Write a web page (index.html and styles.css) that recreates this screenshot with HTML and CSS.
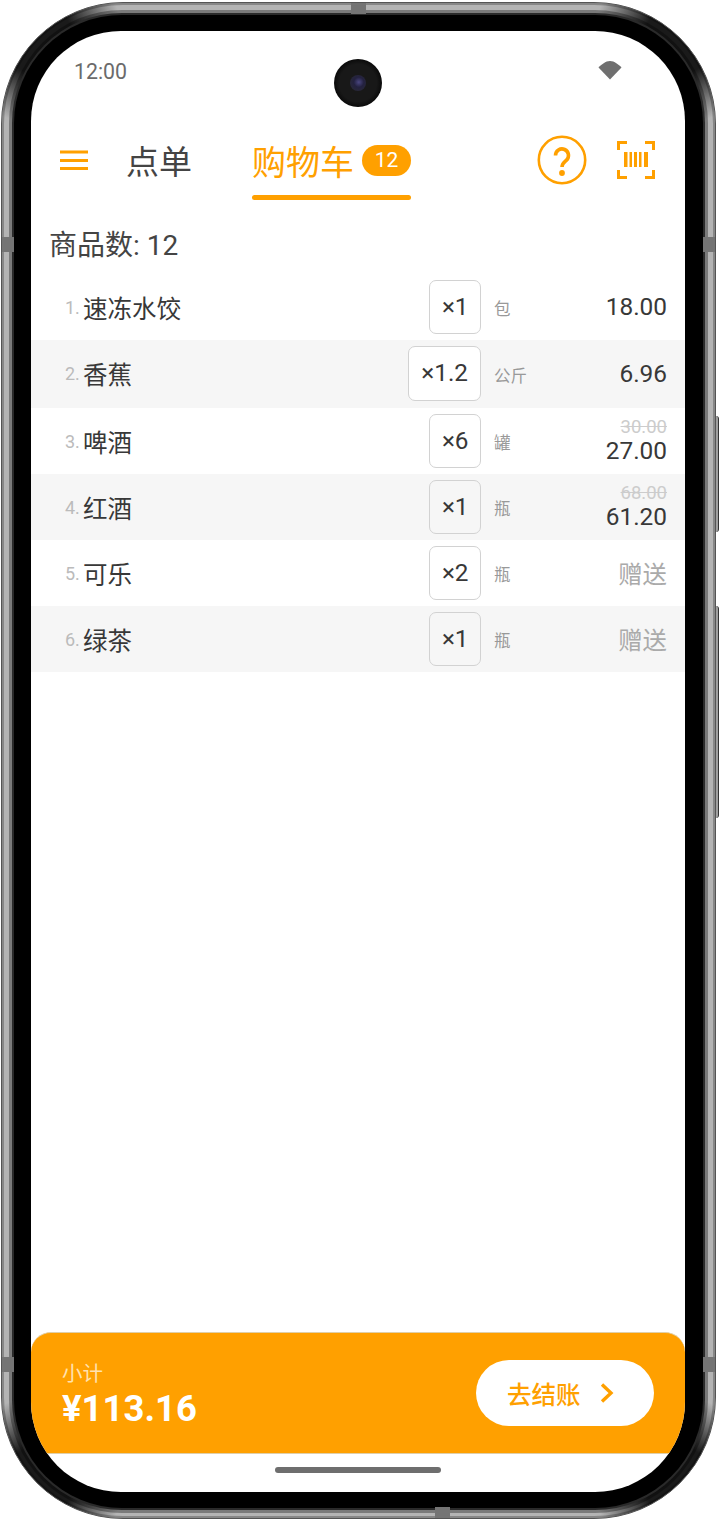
FILE: index.html
```html
<!DOCTYPE html>
<html lang="zh-CN">
<head>
  <meta charset="UTF-8" />
  <meta name="viewport" content="width=device-width, initial-scale=1.0"/>
  <title>购物车</title>
  <link rel="stylesheet" href="styles.css">
</head>
<body>

  <div class="device">
    <span class="side-btn side-btn-top"></span>
    <span class="side-btn side-btn-low"></span>
    <span class="seam seam-left-top"></span>
    <span class="seam seam-right-top"></span>
    <span class="seam seam-left-low"></span>
    <span class="seam seam-right-low"></span>
    <span class="seam seam-top"></span>
    <span class="seam seam-bottom"></span>

    <div class="bezel">
      <div class="screen">
        <div class="camera"><span class="lens"></span></div>

        <div class="status-bar">
          <span class="clock">12:00</span>
          <svg class="wifi" width="24" height="20" viewBox="0 0 24 20">
            <path d="M0.5 7.5C3.5 4.5 7.5 1 12 1s8.500 3.500 11.500 6.500L12 19.500z" fill="#6f6f6f"/>
          </svg>
        </div>

        <div class="header">
          <div class="menu-btn">
            <svg width="28" height="20" viewBox="0 0 28 20">
              <path d="M0 2h28M0 10.500h28M0 18.500h28" stroke="#ffa000" stroke-width="3"/>
            </svg>
          </div>
          <div class="tab">点单</div>
          <div class="tab-active">
            <div class="tab-label">购物车<span class="badge">12</span></div>
            <div class="tab-line"></div>
          </div>
          <div class="help-btn">
            <svg width="50" height="50" viewBox="0 0 50 50" fill="none">
              <circle cx="25" cy="25" r="23.200" stroke="#ffa000" stroke-width="2.600"/>
              <path d="M18.500 20.500a6.500 6.500 0 1 1 10.800 4.800c-2.600 2.300-4.300 3.300-4.300 6.700" stroke="#ffa000" stroke-width="3.600"/>
              <circle cx="25" cy="38" r="2.900" fill="#ffa000"/>
            </svg>
          </div>
          <div class="scan-btn">
            <svg width="38" height="38" viewBox="0 0 38 38" fill="none">
              <path d="M1.500 9V1.500H10M28 1.500h8.500V9M1.500 29v7.500H10M28 36.500h8.500V29" stroke="#ffa000" stroke-width="3"/>
              <path d="M7 11h3.500v15H7zM12.500 11h2.500v15h-2.500zM17 11h3v15h-3zM22 11h2.500v15H22zM27 11h4v15h-4z" fill="#ffa000"/>
            </svg>
          </div>
        </div>

        <div class="count">商品数: 12</div>

        <div class="list">
          <div class="row">
            <span class="num">1.</span>
            <span class="name">速冻水饺</span>
            <span class="chip">×1</span>
            <span class="unit">包</span>
            <span class="price">18.00</span>
          </div>
          <div class="row row-alt row-tall">
            <span class="num">2.</span>
            <span class="name">香蕉</span>
            <span class="chip chip-edit">×1.2</span>
            <span class="unit">公斤</span>
            <span class="price">6.96</span>
          </div>
          <div class="row">
            <span class="num">3.</span>
            <span class="name">啤酒</span>
            <span class="chip">×6</span>
            <span class="unit">罐</span>
            <span class="price"><s class="price-old">30.00</s>27.00</span>
          </div>
          <div class="row row-alt">
            <span class="num">4.</span>
            <span class="name">红酒</span>
            <span class="chip">×1</span>
            <span class="unit">瓶</span>
            <span class="price"><s class="price-old">68.00</s>61.20</span>
          </div>
          <div class="row">
            <span class="num">5.</span>
            <span class="name">可乐</span>
            <span class="chip">×2</span>
            <span class="unit">瓶</span>
            <span class="price price-gift">赠送</span>
          </div>
          <div class="row row-alt">
            <span class="num">6.</span>
            <span class="name">绿茶</span>
            <span class="chip">×1</span>
            <span class="unit">瓶</span>
            <span class="price price-gift">赠送</span>
          </div>
        </div>

        <div class="checkout-bar">
          <div class="totals">
            <div class="totals-label">小计</div>
            <div class="totals-value">¥113.16</div>
          </div>
          <button class="pay-btn" type="button">
            去结账
            <svg width="14" height="22" viewBox="0 0 14 22" fill="none">
              <path d="M2 2.500l9 8.500-9 8.500" stroke="#ffa000" stroke-width="3.400"/>
            </svg>
          </button>
        </div>

        <div class="home-area"><span class="home-bar"></span></div>
      </div>
    </div>
  </div>

</body>
</html>
```

FILE: styles.css
```css
:root {
  --accent-color: #ffa000;
  --text-color: #383838;
  --row-alt: #f6f6f6;
  --chip-border: #d2d2d2;
}

* {
  margin: 0;
  padding: 0;
  box-sizing: border-box;
}

body {
  font-family: Roboto, 'Noto Sans CJK SC', sans-serif;
  background: #ffffff;
  color: var(--text-color);
  width: 720px;
  height: 1521px;
  padding: 2px 0 0 1px;
  overflow: hidden;
}

.device {
  position: relative;
  width: 715px;
  padding: 11px 11px 9px;
  border: 1px solid #555555;
  border-radius: 122px;
  background:
    radial-gradient(circle at 36px 36px, #1a1a1a 35px, transparent 85px),
    radial-gradient(circle at calc(100% - 36px) 36px, #1a1a1a 35px, transparent 85px),
    radial-gradient(circle at 36px calc(100% - 36px), #1a1a1a 35px, transparent 85px),
    radial-gradient(circle at calc(100% - 36px) calc(100% - 36px), #1a1a1a 35px, transparent 85px),
    #b4b4b4;
  box-shadow: inset 0 0 0 2px rgba(0, 0, 0, 0.25);
}

.bezel {
  margin: 1px;
  padding: 16px 18px 16px 17px;
  background: #000000;
  border-radius: 108px;
  box-shadow: 0 0 0 2px #2a2a2a, 0 0 0 5px rgba(0, 0, 0, 0.32);
}

.screen {
  position: relative;
  display: flex;
  flex-direction: column;
  height: 1461px;
  background: #ffffff;
  border-radius: 90px;
  overflow: hidden;
}

/* frame details */
.side-btn {
  position: absolute;
  right: -4px;
  width: 3px;
  background: #a0a0a0;
  border-right: 1px solid #333;
  border-radius: 0 3px 3px 0;
}

.side-btn-top {
  top: 413px;
  height: 116px;
}

.side-btn-low {
  top: 603px;
  height: 212px;
}

.seam {
  position: absolute;
  background: #747474;
}

.seam-left-top,
.seam-right-top,
.seam-left-low,
.seam-right-low {
  width: 12px;
  height: 15px;
}

.seam-left-top { left: 0; top: 234px; }
.seam-right-top { right: 0; top: 234px; }
.seam-left-low { left: 0; top: 1354px; }
.seam-right-low { right: 0; top: 1354px; }

.seam-top,
.seam-bottom {
  width: 15px;
  height: 11px;
}

.seam-top { left: 349px; top: 0; }
.seam-bottom { left: 433px; bottom: 0; }

.camera {
  position: absolute;
  left: 303px;
  top: 28px;
  width: 48px;
  height: 48px;
  display: flex;
  align-items: center;
  justify-content: center;
  border-radius: 50%;
  background: radial-gradient(circle, #181818 0, #181818 55%, #060606 75%);
}

.lens {
  width: 16px;
  height: 16px;
  border-radius: 50%;
  background: radial-gradient(circle at 55% 45%, #4a4680 0, #23213f 40%, #2c2c33 100%);
}

/* status bar */
.status-bar {
  display: flex;
  justify-content: space-between;
  height: 99px;
  padding: 27px 63px 0 43px;
}

.clock {
  font-size: 21.300px;
  line-height: 28px;
  color: #6b6b6b;
}

.wifi {
  margin-top: 2px;
}

/* header */
.header {
  display: flex;
  align-items: flex-start;
  height: 70px;
  padding: 0 30px 0 29px;
}

.menu-btn,
.help-btn,
.scan-btn {
  display: flex;
  align-items: center;
  height: 60px;
}

.tab {
  margin-left: 38px;
  padding-top: 5px;
  font-size: 33px;
  line-height: 56px;
  color: #444444;
}

.tab-active {
  margin-left: 60px;
  display: flex;
  flex-direction: column;
  height: 70px;
}

.tab-label {
  display: flex;
  align-items: center;
  height: 65px;
  padding-bottom: 5px;
  font-size: 34px;
  color: var(--accent-color);
}

.badge {
  width: 49px;
  height: 31px;
  margin: 1px 0 0 8px;
  border-radius: 16px;
  background: var(--accent-color);
  color: #ffffff;
  font-size: 21px;
  line-height: 31px;
  text-align: center;
}

.tab-line {
  height: 5px;
  border-radius: 3px;
  background: var(--accent-color);
}

.help-btn {
  margin-left: auto;
}

.scan-btn {
  margin-left: 30px;
}

/* list */
.count {
  padding: 29px 0 11px 18px;
  font-size: 28px;
  line-height: 34px;
  color: #444444;
}

.row {
  display: flex;
  align-items: center;
  padding: 6px 18px 6px 34px;
}

.row-alt {
  background: var(--row-alt);
}

.row-tall {
  padding-bottom: 7px;
}

.num {
  width: 18px;
  font-size: 18px;
  color: #bbbbbb;
}

.name {
  flex: 1;
  font-size: 24.500px;
  color: var(--text-color);
}

.chip {
  min-width: 51px;
  height: 54px;
  padding: 0 11.500px;
  border: 1.500px solid var(--chip-border);
  border-radius: 7px;
  font-size: 24.300px;
  line-height: 52px;
  text-align: center;
}

.chip-edit {
  height: 55px;
  padding: 0 12px;
  background: #ffffff;
}

.unit {
  width: 70px;
  margin-left: 13px;
  padding-top: 2px;
  font-size: 16.500px;
  color: #999999;
}

.price {
  width: 103px;
  font-size: 24.400px;
  line-height: 28px;
  text-align: right;
  color: var(--text-color);
}

.price-old {
  display: block;
  font-size: 18.500px;
  line-height: 20px;
  color: #cccccc;
}

.price-gift {
  padding-top: 4px;
  color: #aaaaaa;
}

/* checkout */
.checkout-bar {
  display: flex;
  align-items: center;
  justify-content: space-between;
  height: 122px;
  margin-top: auto;
  padding: 0 31px;
  border-top: 1px solid #e0cfa8;
  border-bottom: 1px solid #e0cfa8;
  border-radius: 20px 20px 0 0;
  background: var(--accent-color);
}

.totals {
  padding-top: 6px;
}

.totals-label {
  font-size: 20.500px;
  line-height: 26px;
  color: #ffe2b0;
}

.totals-value {
  font-size: 36.500px;
  font-weight: 700;
  line-height: 44px;
  color: #ffffff;
}

.pay-btn {
  display: flex;
  align-items: center;
  gap: 19px;
  width: 178px;
  height: 66px;
  padding-left: 31px;
  border: none;
  border-radius: 33px;
  background: #ffffff;
  color: var(--accent-color);
  font-family: inherit;
  font-size: 24.500px;
  font-weight: 500;
}

.home-area {
  display: flex;
  align-items: center;
  justify-content: center;
  height: 38px;
  padding: 0 0 6px 0;
}

.home-bar {
  width: 166px;
  height: 6px;
  border-radius: 3px;
  background: #6e6e6e;
}
```
